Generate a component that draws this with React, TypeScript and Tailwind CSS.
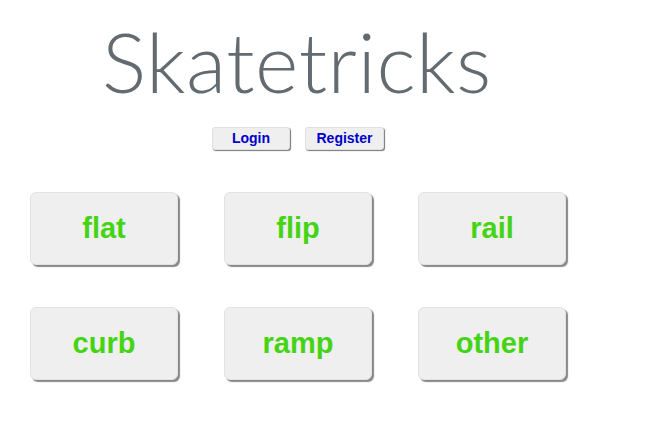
import React from 'react';

const TRICKS = ['flat', 'flip', 'rail', 'curb', 'ramp', 'other'];

export default function App() {
  return (
    <div className="w-[649px] h-[429px] bg-white overflow-hidden">
      <h1 className="ml-[102px] pt-[13px] text-[83px] leading-[96px] font-light text-[#636b70] font-['Lato',sans-serif] tracking-[0.5px]">
        Skatetricks
      </h1>
      <div className="flex gap-[15px] ml-[212px] mt-[18px]">
        <button className="w-[78px] h-[23px] bg-[#efefef] rounded-[3px] border border-[#e0e0e0] shadow-[1px_1px_1px_#777] text-[#0000cc] font-bold text-[14px] font-['Liberation_Sans',Arial,sans-serif]">
          Login
        </button>
        <button className="w-[79px] h-[23px] bg-[#efefef] rounded-[3px] border border-[#e0e0e0] shadow-[1px_1px_1px_#777] text-[#0000cc] font-bold text-[14px] font-['Liberation_Sans',Arial,sans-serif]">
          Register
        </button>
      </div>
      <div className="grid grid-cols-[148px_148px_148px] gap-x-[46px] gap-y-[42px] ml-[30px] mt-[42px]">
        {TRICKS.map((t) => (
          <button
            key={t}
            className="h-[73px] bg-[#efefef] rounded-[6px] border border-[#e2e2e2] shadow-[2px_2px_1px_#888] text-[#44d414] font-bold text-[29px] font-['Liberation_Sans',Arial,sans-serif]"
          >
            {t}
          </button>
        ))}
      </div>
    </div>
  );
}
